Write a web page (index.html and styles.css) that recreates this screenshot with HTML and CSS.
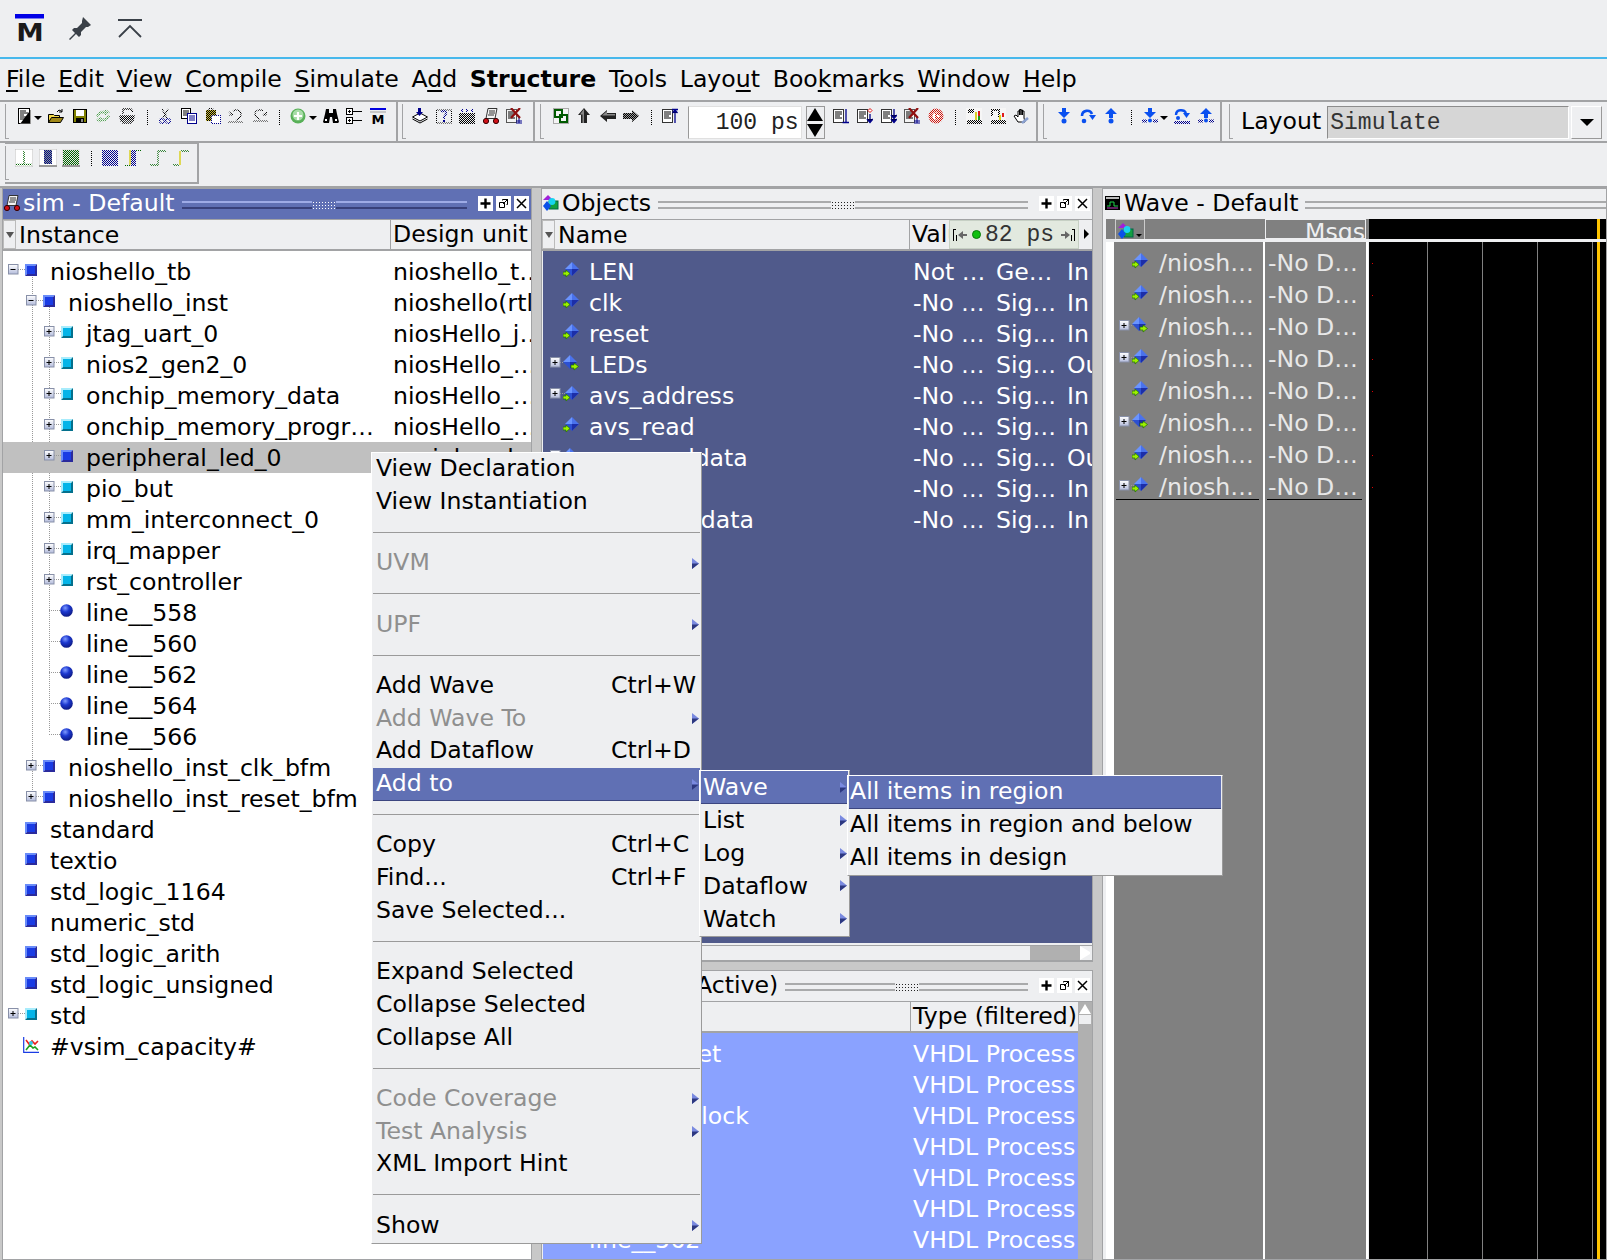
FILE: index.html
```html
<!DOCTYPE html>
<html lang="en">
<head>
  <meta charset="UTF-8">
  <title>ModelSim - sim</title>
  <link rel="stylesheet" href="styles.css">
</head>
<body>

  <svg class="sprite" xmlns="http://www.w3.org/2000/svg">
    <defs>
      <pattern id="dK" width="2" height="2" patternUnits="userSpaceOnUse"><rect width="1" height="1"/><rect x="1" y="1" width="1" height="1"/></pattern>
      <pattern id="dB" width="2" height="2" patternUnits="userSpaceOnUse"><rect width="1" height="1" fill="#00008c"/><rect x="1" y="1" width="1" height="1" fill="#00008c"/></pattern>
      <pattern id="dG" width="2" height="2" patternUnits="userSpaceOnUse"><rect width="1" height="1" fill="#006400"/><rect x="1" y="1" width="1" height="1" fill="#006400"/></pattern>
      <pattern id="dL" width="2" height="2" patternUnits="userSpaceOnUse"><rect width="1" height="1" fill="#4f9e4f"/><rect x="1" y="1" width="1" height="1" fill="#8fc98f"/></pattern>
      <pattern id="dR" width="2" height="2" patternUnits="userSpaceOnUse"><rect width="1" height="1" fill="#d4140c"/><rect x="1" y="1" width="1" height="1" fill="#d4140c"/></pattern>
      <radialGradient id="ballFill" cx="0.4" cy="0.3" r="0.8"><stop offset="0" stop-color="#7f9bff"/><stop offset="0.4" stop-color="#1c38d0"/><stop offset="1" stop-color="#0a1270"/></radialGradient>
      <linearGradient id="expFill" x1="0" y1="0" x2="0" y2="1"><stop offset="0" stop-color="#fff"/><stop offset="1" stop-color="#b4bcdc"/></linearGradient>
    </defs>

    <symbol id="sq-blue" viewBox="0 0 12 12"><path fill="#6a8cf8" d="M0 0h12L9 3H3v6L0 12z"/><path fill="#2a2a9c" d="M12 0v12H0l3-3h6V3z"/><rect x="2" y="2" width="8" height="8" fill="#1a3ce4"/></symbol>
    <symbol id="sq-cyan" viewBox="0 0 12 12"><path fill="#a8ecfc" d="M0 0h12L9 3H3v6L0 12z"/><path fill="#04708c" d="M12 0v12H0l3-3h6V3z"/><rect x="2" y="2" width="8" height="8" fill="#04b4e8"/></symbol>
    <symbol id="ball" viewBox="0 0 13 13"><circle cx="6.5" cy="6.5" r="6.3" fill="url(#ballFill)"/></symbol>
    <symbol id="plus" viewBox="0 0 17 11"><path stroke="#999" stroke-dasharray="1 1" d="M10 5.5h7"/><rect x=".5" y=".5" width="9.5" height="9.5" fill="url(#expFill)" stroke="#8890a8"/><path stroke="#000" d="M2.5 5.5h5M5 3v5"/></symbol>
    <symbol id="minus" viewBox="0 0 17 11"><path stroke="#999" stroke-dasharray="1 1" d="M10 5.5h7"/><rect x=".5" y=".5" width="9.5" height="9.5" fill="url(#expFill)" stroke="#8890a8"/><path stroke="#000" d="M2.5 5.5h5"/></symbol>
    <symbol id="tick" viewBox="0 0 17 11"><path stroke="#999" stroke-dasharray="1 1" d="M5 5.5h12"/></symbol>
    <symbol id="capacity" viewBox="0 0 16 16"><path fill="none" stroke="#1a3ce4" stroke-width="1.2" d="M.7 0v15.3H16"/><path fill="none" stroke="#e8201c" stroke-width="1.6" d="M3 3l3 4 3-3 3 3 3-3"/><path fill="none" stroke="#1ca01c" stroke-width="1.6" d="M3 13l4-5 3 3 2-1 3 3"/><circle cx="8" cy="6" r="2" fill="#38c8e8"/></symbol>

    <symbol id="sig-in" viewBox="0 0 16 16"><path fill="#4a72ec" d="M9 0l7 7-7 7z"/><path fill="#6a94ff" d="M9 0L2 7h7z"/><path fill="#1c2ea8" d="M16 7l-7 7V7z"/><path fill="#2c50d0" d="M2 7l7 7V7z"/><path fill="#9cf000" stroke="#207000" stroke-width=".7" d="M0 10h3V8l4 3.500L3 15v-2H0z"/></symbol>
    <symbol id="sig-out" viewBox="0 0 16 16"><path fill="#4a72ec" d="M7 0l7 7-7 7z"/><path fill="#6a94ff" d="M7 0L0 7h7z"/><path fill="#1c2ea8" d="M14 7l-7 7V7z"/><path fill="#2c50d0" d="M0 7l7 7V7z"/><path fill="#9cf000" stroke="#207000" stroke-width=".7" d="M8 10h3V8l4.500 3.500L11 15v-2H8z"/></symbol>

    <symbol id="objects" viewBox="0 0 16 16"><path fill="#a020d8" d="M5 0l5 5H0z"/><rect x="6" y="6" width="9" height="8" fill="#12a040" stroke="#064"/><path fill="#0a50e8" d="M4 6l4 5-4 5-4-5z"/><circle cx="9" cy="6.5" r="3.4" fill="#18d4f0"/></symbol>
    <symbol id="wave-ico" viewBox="0 0 16 16"><rect width="15" height="14" y="1" fill="#000"/><rect x="1" y="2" width="13" height="2" fill="#bbb"/><path fill="none" stroke="#1fd24a" d="M2 11h3V7h4v4h4"/><path stroke="#c040c0" d="M2 13h11"/></symbol>
    <symbol id="sim-ico" viewBox="0 0 16 16"><path fill="#f4f4f4" stroke="#333" d="M5 .5h9l-2 10H3z"/><path stroke="#333" d="M6 3h6M6 5h6M5 7h6"/><circle cx="3" cy="13" r="2.6" fill="#d01018" stroke="#300"/><circle cx="13" cy="13" r="2.6" fill="#d01018" stroke="#300"/></symbol>

    <symbol id="t-file" viewBox="0 0 16 16"><rect x="2.5" y=".5" width="11" height="15" fill="#fff" stroke="#000"/><path stroke="#000" d="M4 3h6M4 5h8M4 7h4M4 9h8M4 11h7"/><path stroke="#999" d="M14.500 2v14H4"/></symbol>
    <symbol id="t-folder" viewBox="0 0 16 16"><path fill="#f2d84a" stroke="#000" d="M.5 6.5h5l1 1h5v7H.5z"/><path fill="#a08818" stroke="#000" d="M.5 14.5l3-5h12l-3 5z"/><path fill="none" stroke="#000" d="M9 4l2-2 3 1.500M14 1v3h-3"/></symbol>
    <symbol id="t-save" viewBox="0 0 16 16"><rect x="1.500" y="1.500" width="13" height="13" fill="#808000" stroke="#000"/><rect x="4" y="2" width="8" height="6" fill="#fff"/><rect x="4" y="10" width="8" height="4" fill="#000"/><rect x="9" y="11" width="2" height="3" fill="#888"/></symbol>
    <symbol id="t-refresh" viewBox="0 0 16 16"><path fill="url(#dL)" d="M1 8c1-4 5-6 9-5V1l5 3-5 4V6c-3-1-5 0-7 3zM15 8c-1 4-5 6-9 5v2l-5-3 5-4v2c3 1 5 0 7-3z"/></symbol>
    <symbol id="t-print" viewBox="0 0 16 16"><path fill="none" stroke="url(#dK)" stroke-width="1.500" d="M4 6V1h8l2 3M1 8h14l-1 5H2zM4 13v2h8v-2"/><path fill="url(#dK)" d="M2 8h13v4H2z"/></symbol>
    <symbol id="t-cut" viewBox="0 0 16 16"><path fill="none" stroke="url(#dK)" stroke-width="1.300" d="M5 1l5 9M11 1L6 10"/><circle cx="5" cy="13" r="2.300" fill="none" stroke="url(#dB)" stroke-width="1.500"/><circle cx="11" cy="13" r="2.300" fill="none" stroke="url(#dB)" stroke-width="1.500"/></symbol>
    <symbol id="t-copy" viewBox="0 0 16 16"><rect x=".5" y=".5" width="9" height="10" fill="#fff" stroke="#000"/><path stroke="#000" d="M2 3h6M2 5h6M2 7h6"/><rect x="6.500" y="5.500" width="9" height="10" fill="#fff" stroke="#00008c"/><path stroke="#00008c" d="M8 8h6M8 10h6M8 12h6"/></symbol>
    <symbol id="t-paste" viewBox="0 0 16 16"><rect x="1" y="2" width="10" height="11" fill="#d0c040"/><rect x="1" y="2" width="10" height="11" fill="url(#dK)"/><rect x="6.500" y="7.500" width="9" height="8" fill="#fff" stroke="url(#dB)"/><path fill="none" stroke="url(#dK)" d="M4 2V.5h4V2"/></symbol>
    <symbol id="t-undo" viewBox="0 0 16 16"><path fill="none" stroke="url(#dK)" stroke-width="1.200" d="M5 3c3-2 8-1 8 3s-3 5-5 6M1 4l4 3M1 7h4M0 14h15"/></symbol>
    <symbol id="t-redo" viewBox="0 0 16 16"><path fill="none" stroke="url(#dK)" stroke-width="1.200" d="M11 3C8 1 3 2 3 6c0 3 2 4 5 5M15 4l-4 3M15 7h-4M1 13h15"/></symbol>
    <symbol id="t-add" viewBox="0 0 16 16"><circle cx="8" cy="8" r="7.500" fill="#58b058"/><circle cx="8" cy="7" r="5.500" fill="#a8dca8"/><path stroke="#fff" stroke-width="2.200" d="M8 4v8M4 8h8"/></symbol>
    <symbol id="t-bino" viewBox="0 0 16 16"><path d="M3 1h3v4h4V1h3l1 5 2 8-1 1H10l-1-6H7l-1 6H1l-1-1 2-8z"/><path fill="#fff" d="M2 11h2v2H2zM12 11h2v2h-2z"/></symbol>
    <symbol id="t-tree" viewBox="0 0 16 16"><g fill="#fff" stroke="#000"><rect x=".5" y=".5" width="6" height="6"/><rect x=".5" y="9.500" width="6" height="6"/></g><path stroke="#000" d="M2 3.500h3M3.500 2v3M2 12.500h3M3.500 11v3M7 3.500h9M7 12.500h9"/></symbol>
    <symbol id="t-m" viewBox="0 0 16 16"><rect width="16" height="2" fill="#0000e0"/><rect y="3" width="16" height="2" fill="#c8c8c8"/><text x="8" y="15.500" text-anchor="middle" class="logo-m">M</text></symbol>

    <symbol id="t-compile" viewBox="0 0 16 16"><path fill="#fff" stroke="#000" d="M.5 9L8 5l7.500 4L8 13z"/><path fill="none" stroke="#000" d="M.5 11L8 15l7.500-4"/><path fill="#00008c" d="M6 0h3v4h2L7.500 8 4 4h2z"/></symbol>
    <symbol id="t-help" viewBox="0 0 16 16"><rect x=".5" y="2" width="15" height="13" fill="none" stroke="url(#dK)"/><path fill="none" stroke="url(#dB)" stroke-width="2" d="M5 4c2-2 6-1 5 2l-2 3v2"/><rect x="7" y="12" width="2" height="2" fill="#00008c"/></symbol>
    <symbol id="t-wave" viewBox="0 0 16 16"><rect y="5" width="16" height="11" fill="url(#dK)"/><path fill="url(#dB)" d="M2 1h2v3H2zM7 1h2v3H7zM12 1h2v3h-2z"/></symbol>
    <symbol id="t-del" viewBox="0 0 16 16"><rect x=".5" y="1.500" width="10" height="13" fill="#f4f4f4" stroke="#555"/><path stroke="#000" d="M2 4h7M2 6h7M2 8h5M2 10h7"/><path stroke="#00008c" d="M13 8v7M10 13h6M10 15h6"/><path stroke="#901010" stroke-width="2.200" d="M5 0l9 10M14 0L5 10"/></symbol>

    <symbol id="t-link" viewBox="0 0 16 16"><rect x=".5" y=".5" width="15" height="15" fill="#f4f4f4" stroke="#aaa"/><g fill="none" stroke="#005a00" stroke-width="2"><rect x="2" y="2" width="7" height="7"/><rect x="7" y="7" width="7" height="7"/></g></symbol>
    <symbol id="t-up" viewBox="0 0 16 16"><path fill="#222" d="M8 0l6 7h-3v8H5V7H2z"/><path fill="#888" d="M8 1L4 6.500h2.500V15H8z"/></symbol>
    <symbol id="t-left" viewBox="0 0 16 16"><path fill="#222" d="M0 8l7-6v3h9v6H7v3z"/><path fill="#888" d="M2 7.500L7 3v3h8v1.500z"/></symbol>
    <symbol id="t-right" viewBox="0 0 16 16"><path fill="#999" d="M16 8L9 2v3H0v6h9v3z"/><path fill="url(#dK)" d="M16 8L9 2v3H0v6h9v3z"/></symbol>
    <symbol id="t-docup" viewBox="0 0 16 16"><rect x=".5" y="1.500" width="10" height="13" fill="#fff" stroke="#333"/><path stroke="#000" d="M2 4h7M2 6h7M2 8h5M2 10h7"/><path stroke="#00008c" stroke-width="1.300" d="M13 15V3M10 1.500h6M10.500 5L13 2l2.500 3"/></symbol>
    <symbol id="t-doc1" viewBox="0 0 16 16"><rect x=".5" y="1.500" width="10" height="13" fill="#fff" stroke="#333"/><path stroke="#000" d="M2 4h7M2 6h7M2 8h5M2 10h7"/><path stroke="#00008c" stroke-width="1.300" d="M13 1v13M9.500 14.500h7"/></symbol>
    <symbol id="t-doc2" viewBox="0 0 16 16"><rect x=".5" y="1.500" width="10" height="13" fill="#fff" stroke="#333"/><path stroke="#000" d="M2 4h7M2 6h7M2 8h5M2 10h7"/><path stroke="#00008c" stroke-width="1.300" d="M13 6v8M10 11l3 3.500 3-3.500"/><path fill="#fff" stroke="#e01010" d="M13 .5l2 2-2 2-2-2z"/></symbol>
    <symbol id="t-doc3" viewBox="0 0 16 16"><rect x=".5" y="1.500" width="10" height="13" fill="#fff" stroke="#333"/><path stroke="#000" d="M2 4h7M2 6h7M2 8h5M2 10h7"/><path stroke="#00008c" stroke-width="1.300" d="M13 1v14M10 7l3 3.500L16 7M10 11l3 3.500 3-3.500"/></symbol>
    <symbol id="t-red" viewBox="0 0 16 16"><circle cx="8" cy="8" r="7.500" fill="url(#dR)"/><circle cx="8" cy="8" r="3.500" fill="#fff"/><path fill="url(#dR)" d="M7 5h5v2H9v2h3v2H7z"/></symbol>
    <symbol id="t-chart1" viewBox="0 0 16 16"><rect width="16" height="16" fill="#f6f6f6"/><path fill="url(#dK)" d="M2 1h6v4H2zM1 12h15v4H1z"/><path fill="#d8d020" d="M9 4h2v8H9z"/><path fill="#e01c1c" d="M12 3h2v5h-2z"/><path fill="#1c9c1c" d="M12 8h2v4h-2z"/></symbol>
    <symbol id="t-chart2" viewBox="0 0 16 16"><rect width="16" height="16" fill="#f6f6f6"/><path fill="none" stroke="url(#dK)" stroke-width="2" d="M2 8V2h7v8"/><path fill="url(#dK)" d="M1 12h15v4H1z"/><path fill="#d8d020" d="M9 7h2v5H9z"/><path fill="#e01c1c" d="M12 5h2v4h-2z"/></symbol>
    <symbol id="t-hand" viewBox="0 0 16 16"><path fill="#fff" stroke="#000" d="M1 8l2-1 2 2V3h1.500v4V1.500H8V7V2h1.500v5V3H11v7l1 4H5z"/><path stroke="#8aa0d0" stroke-width="2.500" d="M9 15l6-5"/></symbol>

    <symbol id="s-in" viewBox="0 0 16 16"><path fill="#0a50f0" d="M6 0h4v4h4l-6 6-6-6h4z"/><circle cx="8" cy="13" r="2.500" fill="#0a50f0"/></symbol>
    <symbol id="s-over" viewBox="0 0 16 16"><path fill="none" stroke="#0a50f0" stroke-width="2.600" d="M2 8c0-6 8-7 10-2"/><path fill="#0a50f0" d="M9 7h7l-3.500 5z"/><circle cx="4" cy="13" r="2.300" fill="#0a50f0"/></symbol>
    <symbol id="s-out" viewBox="0 0 16 16"><path fill="#0a50f0" d="M8 0l6 6h-4v4H6V6H2z"/><circle cx="8" cy="13" r="2.500" fill="#0a50f0"/></symbol>
    <symbol id="s-inl" viewBox="0 0 16 16"><path fill="#0a50f0" d="M6 0h4v4h4l-6 6-6-6h4z"/><circle cx="8" cy="12.500" r="2" fill="#0a50f0"/><path stroke="url(#dB)" stroke-width="3" d="M0 13h5M11 13h5"/></symbol>
    <symbol id="s-overl" viewBox="0 0 16 16"><path fill="none" stroke="#0a50f0" stroke-width="2.400" d="M2 7c0-6 8-6 10-2"/><path fill="#0a50f0" d="M9 5h7l-3.500 5z"/><circle cx="4" cy="10" r="2" fill="#0a50f0"/><path stroke="url(#dB)" stroke-width="3" d="M0 14.500h16"/></symbol>
    <symbol id="s-outl" viewBox="0 0 16 16"><path fill="#0a50f0" d="M8 0l6 6h-4v4H6V6H2z"/><circle cx="8" cy="12.500" r="2" fill="#0a50f0"/><path stroke="url(#dB)" stroke-width="3" d="M0 13h5M11 13h5"/></symbol>

    <symbol id="w-1" viewBox="0 0 18 18"><rect width="18" height="18" fill="#fff" stroke="#bbb"/><path stroke="url(#dG)" stroke-width="1.500" d="M9 2v13M1 15.500h16"/></symbol>
    <symbol id="w-2" viewBox="0 0 18 18"><rect width="18" height="18" fill="#fff" stroke="#bbb"/><path fill="#8fa08f" d="M5 1h8v14H5z"/><path fill="url(#dB)" d="M5 1h8v14H5z"/><rect y="16" width="18" height="2" fill="#999"/></symbol>
    <symbol id="w-3" viewBox="0 0 18 18"><rect width="18" height="18" fill="#e4e4e4"/><rect x="1" y="1" width="16" height="15" fill="url(#dG)"/><rect y="16" width="18" height="2" fill="#999"/></symbol>
    <symbol id="w-4" viewBox="0 0 18 18"><rect x="1" y="1" width="16" height="16" fill="url(#dB)"/></symbol>
    <symbol id="w-5" viewBox="0 0 18 18"><rect x="6" y="1" width="5" height="16" fill="url(#dB)"/><path stroke="#d8d020" stroke-width="1.500" d="M5 1v15"/><path stroke="url(#dG)" d="M0 16.500h5M11 1.500h6"/></symbol>
    <symbol id="w-6" viewBox="0 0 18 18"><path fill="none" stroke="url(#dG)" stroke-width="1.300" d="M1 16h8V2h8"/></symbol>
    <symbol id="w-7" viewBox="0 0 18 18"><path fill="none" stroke="url(#dG)" stroke-width="1.300" d="M1 16h6M9 2h8"/><path stroke="#d8d020" stroke-width="1.500" d="M8 2v14"/></symbol>

    <symbol id="win-plus" viewBox="0 0 15 15"><path stroke="#000" stroke-width="2.400" d="M7.500 2.500v10M2.500 7.500h10"/></symbol>
    <symbol id="win-pop" viewBox="0 0 15 15"><path fill="none" stroke="#000" d="M3.500 6.500h5v5h-5zM6.500 4.500v-1h5v5h-1M7 8l5-5"/></symbol>
    <symbol id="win-x" viewBox="0 0 15 15"><path stroke="#000" stroke-width="1.500" d="M3 3l9 9M12 3l-9 9"/></symbol>
    <symbol id="sub-arrow" viewBox="0 0 7 11"><path fill="#7a8ae0" d="M0 0l7 5.500L0 11z"/><path fill="#2d3880" d="M0 11l7-5.500H0z"/></symbol>
    <symbol id="cur-l" viewBox="0 0 16 16"><path stroke="#000" d="M2.500 2v12M2 2.500h3M5.500 14V8"/><path fill="#666" d="M7 8l5-4v3h4v2h-4v3z"/></symbol>
    <symbol id="cur-r" viewBox="0 0 16 16"><path stroke="#000" d="M13.500 2v12M14 2.500h-3M10.500 14V8"/><path fill="#666" d="M9 8L4 4v3H0v2h4v3z"/></symbol>
    <symbol id="pin" viewBox="0 0 24 24"><path fill="#3a4048" d="M15 1l8 8-3 2-2 0-5 5 0 3-2 2-3-3-6 6-1-1 6-6-3-3 2-2 3 0 5-5 0-2z"/></symbol>
  </svg>

  <div class="titlebar">
    <div class="wm-logo"><span class="wm-logo__bar"></span><span class="wm-logo__m">M</span></div>
    <svg class="wm-pin"><use href="#pin"/></svg>
    <svg class="wm-shade" viewBox="0 0 24 20"><path fill="none" stroke="#3a4048" stroke-width="1.800" d="M0 1h24M1 18L12 7l11 11"/></svg>
  </div>

  <nav class="menubar">
    <span><u>F</u>ile</span>
    <span><u>E</u>dit</span>
    <span><u>V</u>iew</span>
    <span><u>C</u>ompile</span>
    <span><u>S</u>imulate</span>
    <span>A<u>d</u>d</span>
    <span class="menubar__active">Str<u>u</u>cture</span>
    <span>T<u>o</u>ols</span>
    <span>Layo<u>u</u>t</span>
    <span>Boo<u>k</u>marks</span>
    <span><u>W</u>indow</span>
    <span><u>H</u>elp</span>
  </nav>

  <div class="toolrow">
    <div class="toolbar toolbar--a">
      <svg class="tool"><use href="#t-file"/></svg><i class="drop"></i>
      <svg class="tool"><use href="#t-folder"/></svg>
      <svg class="tool"><use href="#t-save"/></svg>
      <svg class="tool"><use href="#t-refresh"/></svg>
      <svg class="tool"><use href="#t-print"/></svg>
      <i class="sep"></i>
      <svg class="tool"><use href="#t-cut"/></svg>
      <svg class="tool"><use href="#t-copy"/></svg>
      <svg class="tool"><use href="#t-paste"/></svg>
      <svg class="tool"><use href="#t-undo"/></svg>
      <svg class="tool"><use href="#t-redo"/></svg>
      <i class="sep"></i>
      <svg class="tool"><use href="#t-add"/></svg><i class="drop"></i>
      <svg class="tool"><use href="#t-bino"/></svg>
      <svg class="tool"><use href="#t-tree"/></svg>
      <svg class="tool"><use href="#t-m"/></svg>
    </div>
    <div class="toolbar toolbar--b">
      <svg class="tool"><use href="#t-compile"/></svg>
      <svg class="tool"><use href="#t-help"/></svg>
      <svg class="tool"><use href="#t-wave"/></svg>
      <svg class="tool"><use href="#sim-ico"/></svg>
      <svg class="tool"><use href="#t-del"/></svg>
    </div>
    <div class="toolbar toolbar--c">
      <svg class="tool"><use href="#t-link"/></svg>
      <svg class="tool"><use href="#t-up"/></svg>
      <svg class="tool"><use href="#t-left"/></svg>
      <svg class="tool"><use href="#t-right"/></svg>
      <i class="sep"></i>
      <svg class="tool"><use href="#t-docup"/></svg>
      <div class="runlength">100 ps</div>
      <div class="spin"><i class="spin__up"></i><i class="spin__down"></i></div>
      <svg class="tool"><use href="#t-doc1"/></svg>
      <svg class="tool"><use href="#t-doc2"/></svg>
      <svg class="tool"><use href="#t-doc3"/></svg>
      <svg class="tool"><use href="#t-del"/></svg>
      <svg class="tool"><use href="#t-red"/></svg>
      <i class="sep"></i>
      <svg class="tool"><use href="#t-chart1"/></svg>
      <svg class="tool"><use href="#t-chart2"/></svg>
      <svg class="tool"><use href="#t-hand"/></svg>
    </div>
    <div class="toolbar toolbar--d">
      <svg class="tool"><use href="#s-in"/></svg>
      <svg class="tool"><use href="#s-over"/></svg>
      <svg class="tool"><use href="#s-out"/></svg>
      <i class="sep"></i>
      <svg class="tool"><use href="#s-inl"/></svg><i class="drop"></i>
      <svg class="tool"><use href="#s-overl"/></svg>
      <svg class="tool"><use href="#s-outl"/></svg>
    </div>
    <div class="toolbar toolbar--e">
      <span class="layout-label">Layout</span>
      <div class="combo">Simulate</div>
      <div class="combo__btn"><i></i></div>
    </div>
  </div>

  <div class="toolrow toolrow--short">
    <div class="toolbar toolbar--f">
      <svg class="tool"><use href="#w-1"/></svg>
      <svg class="tool"><use href="#w-2"/></svg>
      <svg class="tool"><use href="#w-3"/></svg>
      <i class="sep"></i>
      <svg class="tool"><use href="#w-4"/></svg>
      <svg class="tool"><use href="#w-5"/></svg>
      <svg class="tool"><use href="#w-6"/></svg>
      <svg class="tool"><use href="#w-7"/></svg>
    </div>
  </div>

  <main class="workspace">

    <section class="pane pane--sim">
      <header class="paneTitle paneTitle--active">
        <svg class="paneTitle__icon"><use href="#sim-ico"/></svg>
        <span>sim - Default</span>
        <div class="grip"></div>
        <div class="winBtns">
          <b><svg><use href="#win-plus"/></svg></b><b><svg><use href="#win-pop"/></svg></b><b><svg><use href="#win-x"/></svg></b>
        </div>
      </header>
      <div class="colHead colHead--sim">
        <span class="colHead__sort"></span>
        <span>Instance</span>
        <span>Design unit</span>
      </div>
      <div class="tree">
        <i class="vline vline--one"></i>
        <i class="vline vline--two"></i>
        <div class="tree__row l0"><svg class="exp"><use href="#minus"/></svg><svg class="ico"><use href="#sq-blue"/></svg><span class="tree__name">nioshello_tb</span><span class="tree__unit">nioshello_t…</span></div>
        <div class="tree__row l1"><svg class="exp"><use href="#minus"/></svg><svg class="ico"><use href="#sq-blue"/></svg><span class="tree__name">nioshello_inst</span><span class="tree__unit">nioshello(rtl)</span></div>
        <div class="tree__row l2"><svg class="exp"><use href="#plus"/></svg><svg class="ico"><use href="#sq-cyan"/></svg><span class="tree__name">jtag_uart_0</span><span class="tree__unit">niosHello_j…</span></div>
        <div class="tree__row l2"><svg class="exp"><use href="#plus"/></svg><svg class="ico"><use href="#sq-cyan"/></svg><span class="tree__name">nios2_gen2_0</span><span class="tree__unit">niosHello_…</span></div>
        <div class="tree__row l2"><svg class="exp"><use href="#plus"/></svg><svg class="ico"><use href="#sq-cyan"/></svg><span class="tree__name">onchip_memory_data</span><span class="tree__unit">niosHello_…</span></div>
        <div class="tree__row l2"><svg class="exp"><use href="#plus"/></svg><svg class="ico"><use href="#sq-cyan"/></svg><span class="tree__name">onchip_memory_progr…</span><span class="tree__unit">niosHello_…</span></div>
        <div class="tree__row l2 tree__row--selected"><svg class="exp"><use href="#plus"/></svg><svg class="ico"><use href="#sq-blue"/></svg><span class="tree__name">peripheral_led_0</span><span class="tree__unit">peripheral_…</span></div>
        <div class="tree__row l2"><svg class="exp"><use href="#plus"/></svg><svg class="ico"><use href="#sq-cyan"/></svg><span class="tree__name">pio_but</span></div>
        <div class="tree__row l2"><svg class="exp"><use href="#plus"/></svg><svg class="ico"><use href="#sq-cyan"/></svg><span class="tree__name">mm_interconnect_0</span></div>
        <div class="tree__row l2"><svg class="exp"><use href="#plus"/></svg><svg class="ico"><use href="#sq-cyan"/></svg><span class="tree__name">irq_mapper</span></div>
        <div class="tree__row l2"><svg class="exp"><use href="#plus"/></svg><svg class="ico"><use href="#sq-cyan"/></svg><span class="tree__name">rst_controller</span></div>
        <div class="tree__row l2"><svg class="exp"><use href="#tick"/></svg><svg class="ico ico--ball"><use href="#ball"/></svg><span class="tree__name">line__558</span></div>
        <div class="tree__row l2"><svg class="exp"><use href="#tick"/></svg><svg class="ico ico--ball"><use href="#ball"/></svg><span class="tree__name">line__560</span></div>
        <div class="tree__row l2"><svg class="exp"><use href="#tick"/></svg><svg class="ico ico--ball"><use href="#ball"/></svg><span class="tree__name">line__562</span></div>
        <div class="tree__row l2"><svg class="exp"><use href="#tick"/></svg><svg class="ico ico--ball"><use href="#ball"/></svg><span class="tree__name">line__564</span></div>
        <div class="tree__row l2"><svg class="exp"><use href="#tick"/></svg><svg class="ico ico--ball"><use href="#ball"/></svg><span class="tree__name">line__566</span></div>
        <div class="tree__row l1"><svg class="exp"><use href="#plus"/></svg><svg class="ico"><use href="#sq-blue"/></svg><span class="tree__name">nioshello_inst_clk_bfm</span></div>
        <div class="tree__row l1"><svg class="exp"><use href="#plus"/></svg><svg class="ico"><use href="#sq-blue"/></svg><span class="tree__name">nioshello_inst_reset_bfm</span></div>
        <div class="tree__row l0"><i class="exp"></i><svg class="ico"><use href="#sq-blue"/></svg><span class="tree__name">standard</span></div>
        <div class="tree__row l0"><i class="exp"></i><svg class="ico"><use href="#sq-blue"/></svg><span class="tree__name">textio</span></div>
        <div class="tree__row l0"><i class="exp"></i><svg class="ico"><use href="#sq-blue"/></svg><span class="tree__name">std_logic_1164</span></div>
        <div class="tree__row l0"><i class="exp"></i><svg class="ico"><use href="#sq-blue"/></svg><span class="tree__name">numeric_std</span></div>
        <div class="tree__row l0"><i class="exp"></i><svg class="ico"><use href="#sq-blue"/></svg><span class="tree__name">std_logic_arith</span></div>
        <div class="tree__row l0"><i class="exp"></i><svg class="ico"><use href="#sq-blue"/></svg><span class="tree__name">std_logic_unsigned</span></div>
        <div class="tree__row l0"><svg class="exp"><use href="#plus"/></svg><svg class="ico"><use href="#sq-cyan"/></svg><span class="tree__name">std</span></div>
        <div class="tree__row l0"><i class="exp"></i><svg class="ico ico--cap"><use href="#capacity"/></svg><span class="tree__name">#vsim_capacity#</span></div>
      </div>
    </section>

    <div class="sash"></div>

    <div class="midColumn">
      <section class="pane pane--objects">
        <header class="paneTitle">
          <svg class="paneTitle__icon"><use href="#objects"/></svg>
          <span>Objects</span>
          <div class="grip"></div>
          <div class="winBtns">
            <b><svg><use href="#win-plus"/></svg></b><b><svg><use href="#win-pop"/></svg></b><b><svg><use href="#win-x"/></svg></b>
          </div>
        </header>
        <div class="colHead colHead--objects">
          <span class="colHead__sort"></span>
          <span>Name</span>
          <span>Value</span>
          <div class="cursorBox">
            <svg><use href="#cur-l"/></svg>
            <i class="cursorBox__dot"></i>
            <span class="cursorBox__time">82 ps</span>
            <svg><use href="#cur-r"/></svg>
          </div>
          <i class="cursorMore"></i>
        </div>
        <div class="objList">
          <div class="objRow"><i class="exp"></i><svg class="sig"><use href="#sig-in"/></svg><span>LEN</span><span>Not …</span><span>Ge…</span><span>In</span></div>
          <div class="objRow"><i class="exp"></i><svg class="sig"><use href="#sig-in"/></svg><span>clk</span><span>-No …</span><span>Sig…</span><span>In</span></div>
          <div class="objRow"><i class="exp"></i><svg class="sig"><use href="#sig-in"/></svg><span>reset</span><span>-No …</span><span>Sig…</span><span>In</span></div>
          <div class="objRow"><svg class="exp"><use href="#plus"/></svg><svg class="sig"><use href="#sig-out"/></svg><span>LEDs</span><span>-No …</span><span>Sig…</span><span>Ou</span></div>
          <div class="objRow"><svg class="exp"><use href="#plus"/></svg><svg class="sig"><use href="#sig-in"/></svg><span>avs_address</span><span>-No …</span><span>Sig…</span><span>In</span></div>
          <div class="objRow"><i class="exp"></i><svg class="sig"><use href="#sig-in"/></svg><span>avs_read</span><span>-No …</span><span>Sig…</span><span>In</span></div>
          <div class="objRow"><svg class="exp"><use href="#plus"/></svg><svg class="sig"><use href="#sig-out"/></svg><span>avs_readdata</span><span>-No …</span><span>Sig…</span><span>Ou</span></div>
          <div class="objRow"><i class="exp"></i><svg class="sig"><use href="#sig-in"/></svg><span>avs_write</span><span>-No …</span><span>Sig…</span><span>In</span></div>
          <div class="objRow"><svg class="exp"><use href="#plus"/></svg><svg class="sig"><use href="#sig-in"/></svg><span>avs_writedata</span><span>-No …</span><span>Sig…</span><span>In</span></div>
        </div>
        <div class="hscroll"><i class="hscroll__thumb"></i><i class="hscroll__arrow"></i></div>
      </section>

      <div class="hsash"></div>

      <section class="pane pane--processes">
        <header class="paneTitle">
          <span class="paneTitle__pad">Processes (Active)</span>
          <div class="grip"></div>
          <div class="winBtns">
            <b><svg><use href="#win-plus"/></svg></b><b><svg><use href="#win-pop"/></svg></b><b><svg><use href="#win-x"/></svg></b>
          </div>
        </header>
        <div class="procBody">
          <div class="procMain">
            <div class="colHead colHead--proc">
              <span>Name</span>
              <span>Type (filtered)</span>
            </div>
            <div class="procList">
              <div class="procRow"><span>clock_reset</span><span>VHDL Process</span></div>
              <div class="procRow"><span>line__550</span><span>VHDL Process</span></div>
              <div class="procRow"><span>monitor-clock</span><span>VHDL Process</span></div>
              <div class="procRow"><span>line__556</span><span>VHDL Process</span></div>
              <div class="procRow"><span>line__558</span><span>VHDL Process</span></div>
              <div class="procRow"><span>line__560</span><span>VHDL Process</span></div>
              <div class="procRow"><span>line__562</span><span>VHDL Process</span></div>
            </div>
          </div>
          <div class="vscroll"><i class="vscroll__arrow"></i><i class="vscroll__box"></i></div>
        </div>
      </section>
    </div>

    <div class="sash"></div>

    <section class="pane pane--wave">
      <header class="paneTitle">
        <svg class="paneTitle__icon"><use href="#wave-ico"/></svg>
        <span>Wave - Default</span>
        <div class="grip grip--plain"></div>
      </header>
      <div class="waveHead">
        <div class="waveHead__names"><div class="waveHead__filter"><svg><use href="#objects"/></svg><i></i></div></div>
        <div class="waveHead__msgs"><span>Msgs</span></div>
        <div class="waveHead__plot"></div>
      </div>
      <div class="waveBody">
        <div class="waveNames">
          <div class="waveRow"><i class="exp"></i><svg class="sig"><use href="#sig-in"/></svg><span>/niosh…</span></div>
          <div class="waveRow"><i class="exp"></i><svg class="sig"><use href="#sig-in"/></svg><span>/niosh…</span></div>
          <div class="waveRow"><svg class="exp"><use href="#plus"/></svg><svg class="sig"><use href="#sig-out"/></svg><span>/niosh…</span></div>
          <div class="waveRow"><svg class="exp"><use href="#plus"/></svg><svg class="sig"><use href="#sig-in"/></svg><span>/niosh…</span></div>
          <div class="waveRow"><i class="exp"></i><svg class="sig"><use href="#sig-in"/></svg><span>/niosh…</span></div>
          <div class="waveRow"><svg class="exp"><use href="#plus"/></svg><svg class="sig"><use href="#sig-out"/></svg><span>/niosh…</span></div>
          <div class="waveRow"><i class="exp"></i><svg class="sig"><use href="#sig-in"/></svg><span>/niosh…</span></div>
          <div class="waveRow"><svg class="exp"><use href="#plus"/></svg><svg class="sig"><use href="#sig-in"/></svg><span>/niosh…</span></div>
          <div class="waveEnd"></div>
        </div>
        <div class="waveVals">
          <div class="waveRow">-No D…</div>
          <div class="waveRow">-No D…</div>
          <div class="waveRow">-No D…</div>
          <div class="waveRow">-No D…</div>
          <div class="waveRow">-No D…</div>
          <div class="waveRow">-No D…</div>
          <div class="waveRow">-No D…</div>
          <div class="waveRow">-No D…</div>
          <div class="waveEnd"></div>
        </div>
        <div class="wavePlot">
          <div class="waveCursor"></div>
          <div class="waveRow"><i class="mark"></i></div>
          <div class="waveRow"><i class="mark"></i></div>
          <div class="waveRow"></div>
          <div class="waveRow"><i class="mark"></i></div>
          <div class="waveRow"><i class="mark"></i></div>
          <div class="waveRow"></div>
          <div class="waveRow"><i class="mark"></i></div>
          <div class="waveRow"><i class="mark"></i></div>
        </div>
      </div>
    </section>

  </main>

  <!-- context menu over the sim pane -->
  <div class="menu menu--context">
    <div class="menu__item">View Declaration</div>
    <div class="menu__item">View Instantiation</div>
    <hr class="menu__sep">
    <div class="menu__item menu__item--off">UVM<svg class="subArrow"><use href="#sub-arrow"/></svg></div>
    <hr class="menu__sep">
    <div class="menu__item menu__item--off">UPF<svg class="subArrow"><use href="#sub-arrow"/></svg></div>
    <hr class="menu__sep">
    <div class="menu__item">Add Wave<span class="menu__key">Ctrl+W</span></div>
    <div class="menu__item menu__item--off">Add Wave To<svg class="subArrow"><use href="#sub-arrow"/></svg></div>
    <div class="menu__item">Add Dataflow<span class="menu__key">Ctrl+D</span></div>
    <div class="menu__item menu__item--on">Add to<svg class="subArrow"><use href="#sub-arrow"/></svg></div>
    <hr class="menu__sep">
    <div class="menu__item">Copy<span class="menu__key">Ctrl+C</span></div>
    <div class="menu__item">Find...<span class="menu__key">Ctrl+F</span></div>
    <div class="menu__item">Save Selected...</div>
    <hr class="menu__sep">
    <div class="menu__item">Expand Selected</div>
    <div class="menu__item">Collapse Selected</div>
    <div class="menu__item">Collapse All</div>
    <hr class="menu__sep">
    <div class="menu__item menu__item--off">Code Coverage<svg class="subArrow"><use href="#sub-arrow"/></svg></div>
    <div class="menu__item menu__item--off">Test Analysis<svg class="subArrow"><use href="#sub-arrow"/></svg></div>
    <div class="menu__item">XML Import Hint</div>
    <hr class="menu__sep">
    <div class="menu__item">Show<svg class="subArrow"><use href="#sub-arrow"/></svg></div>
  </div>

  <div class="menu menu--addto">
    <div class="menu__item menu__item--on">Wave<svg class="subArrow"><use href="#sub-arrow"/></svg></div>
    <div class="menu__item">List<svg class="subArrow"><use href="#sub-arrow"/></svg></div>
    <div class="menu__item">Log<svg class="subArrow"><use href="#sub-arrow"/></svg></div>
    <div class="menu__item">Dataflow<svg class="subArrow"><use href="#sub-arrow"/></svg></div>
    <div class="menu__item">Watch<svg class="subArrow"><use href="#sub-arrow"/></svg></div>
  </div>

  <div class="menu menu--wave">
    <div class="menu__item menu__item--on">All items in region</div>
    <div class="menu__item">All items in region and below</div>
    <div class="menu__item">All items in design</div>
  </div>

</body>
</html>
```

FILE: styles.css
```css
* {
  box-sizing: border-box;
  padding: 0;
  margin: 0;
}
body {
  width: 1607px;
  height: 1260px;
  overflow: hidden;
  position: relative;
  background-color: #eeeff1;
  color: #000;
  font-family: "DejaVu Sans", sans-serif;
  font-size: 23.6px;
  display: flex;
  flex-direction: column;
}
.sprite {
  display: block;
  width: 0;
  height: 0;
  overflow: hidden;
}
.logo-m {
  font-family: "DejaVu Sans", sans-serif;
  font-weight: 700;
  font-size: 13px;
  fill: #000;
}
i {
  display: block;
}

/* window manager strip */
.titlebar {
  height: 59px;
  flex: none;
  display: flex;
  align-items: flex-start;
  border-bottom: 2px solid #47b8ec;
}
.wm-logo {
  width: 29px;
  margin: 14px 0 0 15px;
  display: flex;
  flex-direction: column;
  align-items: center;
}
.wm-logo__bar {
  display: block;
  width: 29px;
  height: 5px;
  background-color: #0000e6;
  border-bottom: 1px solid #7a7af0;
}
.wm-logo__m {
  font-weight: 700;
  font-size: 24px;
  line-height: 28px;
  color: #1a1a1a;
  transform: scaleX(1.15);
}
.wm-pin {
  width: 24px;
  height: 24px;
  margin: 16px 0 0 24px;
}
.wm-shade {
  width: 24px;
  height: 20px;
  margin: 19px 0 0 26px;
}

/* menu bar */
.menubar {
  height: 41px;
  flex: none;
  display: flex;
  align-items: center;
  padding: 0 0 2px 6px;
  gap: 12.7px;
}
.menubar u {
  text-underline-offset: 3px;
}
.menubar__active {
  font-weight: 700;
}

/* tool bars */
.toolrow {
  height: 43px;
  flex: none;
  display: flex;
  border-top: 2px solid #a2a3a5;
  border-bottom: 2px solid #a2a3a5;
}
.toolrow--short {
  height: 43px;
  border: none;
}
.toolbar {
  display: flex;
  align-items: flex-start;
  padding-top: 6px;
  height: 100%;
  position: relative;
  border-right: 2px solid #a2a3a5;
}
.toolbar::before {
  content: "";
  position: absolute;
  left: 0;
  top: 2px;
  bottom: 2px;
  width: 3px;
  border-left: 1px solid #a2a3a5;
  border-bottom: 1px solid #a2a3a5;
}
.toolbar--a {
  width: 393px;
  margin-left: 5px;
  padding-left: 6.8px;
}
.toolbar--b {
  width: 133px;
  margin-left: 4px;
  padding-left: 6.2px;
}
.toolbar--c {
  width: 498px;
  margin-left: 5px;
  padding-left: 8.8px;
}
.toolbar--d {
  width: 179px;
  margin-left: 5px;
  padding-left: 9.2px;
}
.toolbar--e {
  flex: 1;
  border-right: none;
  padding: 4px 0 0 12px;
  margin-left: 7px;
}
.toolbar--f {
  width: 194px;
  height: 41px;
  margin-left: 5px;
  padding: 5px 0 0 7px;
  border-top: 1px solid #a2a3a5;
  border-bottom: 2px solid #a2a3a5;
}
.tool {
  display: block;
  flex: none;
  width: 16px;
  height: 16px;
  margin: 0 3.8px;
}
.toolbar--f .tool {
  width: 18px;
  height: 18px;
  margin: 0 2.9px;
}
.drop {
  flex: none;
  width: 0;
  height: 0;
  margin: 8px 2px 0 -1px;
  border-left: 4px solid transparent;
  border-right: 4px solid transparent;
  border-top: 4px solid #000;
}
.sep {
  flex: none;
  width: 1px;
  height: 16px;
  margin: 2px 6px 0 7.8px;
  background-image: repeating-linear-gradient(#000 0 1px, transparent 1px 2px);
}
.runlength {
  flex: none;
  width: 114px;
  height: 33px;
  margin: -2px 4px 0 6px;
  background-color: #fff;
  border: 1px solid #e0e0e0;
  border-left-color: #999;
  font-family: "Liberation Mono", monospace;
  font-size: 23px;
  line-height: 33px;
  color: #222;
  text-align: right;
  padding-right: 2px;
}
.spin {
  flex: none;
  width: 19px;
  height: 33px;
  margin: -2px 5px 0 0;
  border: 1px solid #999;
  display: flex;
  flex-direction: column;
  align-items: center;
  justify-content: space-between;
  padding: 1px 0;
}
.spin__up {
  border-left: 8px solid transparent;
  border-right: 8px solid transparent;
  border-bottom: 13px solid #000;
}
.spin__down {
  border-left: 8px solid transparent;
  border-right: 8px solid transparent;
  border-top: 13px solid #000;
}
.layout-label {
  line-height: 30px;
  margin-right: 6px;
}
.combo {
  width: 242px;
  height: 33px;
  flex: none;
  background-color: #d6d6d6;
  border: 1px solid #8c8c8c;
  border-right-color: #fff;
  border-bottom-color: #fff;
  font-family: "Liberation Mono", monospace;
  font-size: 23px;
  line-height: 33px;
  color: #333;
  padding-left: 2px;
}
.combo__btn {
  width: 31px;
  height: 33px;
  flex: none;
  margin-left: 2px;
  border: 1px solid #fff;
  border-right-color: #999;
  border-bottom-color: #999;
  display: flex;
  align-items: center;
  justify-content: center;
}
.combo__btn i {
  border-left: 7px solid transparent;
  border-right: 7px solid transparent;
  border-top: 7px solid #000;
}

/* panes */
.workspace {
  flex: 1;
  min-height: 0;
  display: flex;
  padding-left: 2px;
  background-color: #c8c8c8;
  border-top: 2px solid #a2a3a5;
}
.sash {
  flex: none;
  width: 9px;
  background-color: #c8c8c8;
}
.hsash {
  flex: none;
  height: 8px;
  background-color: #c8c8c8;
}
.pane {
  display: flex;
  flex-direction: column;
  background-color: #eeeff1;
  border: 1px solid #a2a3a5;
}
.pane--sim {
  width: 530px;
  flex: none;
}
.midColumn {
  width: 552px;
  flex: none;
  display: flex;
  flex-direction: column;
}
.pane--objects {
  height: 774px;
  flex: none;
}
.pane--processes {
  flex: 1;
  min-height: 0;
}
.pane--wave {
  flex: 1;
  min-width: 0;
}
.pane--wave .paneTitle {
  padding-left: 2px;
}
.paneTitle {
  height: 30px;
  flex: none;
  display: flex;
  align-items: center;
  padding: 0 0 2px 1px;
  gap: 3px;
  --grip-bg: #eeeff1;
  --grip-dot: #222;
  --grip-top: #a9aaab;
  --grip-bottom: #a9aaab;
}
.paneTitle--active {
  background-color: #6070b4;
  color: #fff;
  --grip-bg: #6070b4;
  --grip-dot: #fff;
  --grip-top: #9eabe6;
  --grip-bottom: #38407a;
}
.paneTitle__icon {
  width: 16px;
  height: 16px;
  flex: none;
}
.paneTitle__pad {
  padding-left: 20px;
}
.grip {
  flex: 1;
  height: 8px;
  border-top: 2px solid var(--grip-top);
  border-bottom: 2px solid var(--grip-bottom);
  margin: 3px 8px 0 4px;
  position: relative;
}
.grip::after {
  content: "";
  position: absolute;
  left: 50%;
  top: -2px;
  bottom: -2px;
  width: 24px;
  margin-left: -12px;
  background-color: var(--grip-bg);
  background-image: radial-gradient(var(--grip-dot) 35%, transparent 40%);
  background-size: 3px 3px;
}
.grip--plain {
  margin-right: 0;
}
.grip--plain::after {
  display: none;
}
.winBtns {
  display: flex;
  gap: 3px;
  padding-right: 2px;
}
.winBtns b {
  display: block;
  width: 15px;
  height: 15px;
  background-color: #fff;
}
.winBtns svg {
  display: block;
  width: 15px;
  height: 15px;
}
.colHead {
  height: 32px;
  flex: none;
  display: flex;
  align-items: center;
  position: relative;
  border-top: 1px solid #a2a3a5;
  border-bottom: 2px solid #a2a3a5;
}
.colHead--sim {
  display: grid;
  grid-template-columns: 16px 371px 1fr;
}
.colHead--objects {
  display: grid;
  grid-template-columns: 16px 351px 1fr;
}
.colHead--sim span + span + span,
.colHead--objects span + span + span,
.colHead--proc span + span {
  border-left: 1px solid #a2a3a5;
  padding-left: 2px;
  line-height: 29px;
  white-space: nowrap;
  overflow: hidden;
}
.colHead__sort {
  width: 13px;
  height: 29px;
  border: 1px solid #bbb;
  display: flex;
  align-items: center;
  justify-content: center;
}
.colHead__sort::after {
  content: "";
  border-left: 4px solid transparent;
  border-right: 4px solid transparent;
  border-top: 6px solid #555;
}

/* sim tree */
.tree {
  flex: 1;
  background-color: #fff;
  padding-top: 5px;
  position: relative;
}
.vline {
  position: absolute;
  width: 1px;
  background-image: repeating-linear-gradient(#999 0 1px, transparent 1px 2px);
}
.vline--one {
  left: 29px;
  top: 20px;
  height: 523px;
}
.vline--two {
  left: 46px;
  top: 50px;
  height: 431px;
}
.tree__row {
  height: 31px;
  display: flex;
  align-items: center;
  position: relative;
  white-space: nowrap;
}
.l0 { padding-left: 5px; }
.l1 { padding-left: 23px; }
.l2 { padding-left: 41px; }
.tree__row--selected {
  background-color: #c0c0c0;
}
.exp {
  display: block;
  flex: none;
  width: 17px;
  height: 11px;
  margin-bottom: 4px;
}
.ico {
  flex: none;
  width: 12px;
  height: 12px;
  margin: 0 13px 4px 0;
}
.ico--ball {
  width: 13px;
  height: 13px;
  margin-left: -1px;
}
.ico--cap {
  width: 16px;
  height: 16px;
  margin: 0 11px 4px -2px;
}
.tree__unit {
  position: absolute;
  left: 390px;
  width: 138px;
  overflow: hidden;
}

/* objects */
.cursorBox {
  position: absolute;
  left: 407px;
  top: 0;
  height: 29px;
  width: 130px;
  background-color: #e2e9df;
  border: 1px solid #c6d0c4;
  display: flex;
  align-items: center;
  font-family: "Liberation Mono", monospace;
  font-size: 23px;
  color: #333;
}
.cursorBox svg {
  width: 16px;
  height: 16px;
  flex: none;
  margin: 0 1px;
}
.cursorBox__dot {
  width: 9px;
  height: 9px;
  border-radius: 50%;
  background-color: #10c010;
  border: 1px solid #0a7a0a;
  margin: 0 4px;
}
.cursorBox__time {
  flex: 1;
  white-space: pre;
}
.cursorMore {
  position: absolute;
  left: 542px;
  top: 9px;
  border-top: 5px solid transparent;
  border-bottom: 5px solid transparent;
  border-left: 5px solid #000;
}
.objList {
  flex: 1;
  background-color: #505a8b;
  padding-top: 5px;
  margin-left: 1px;
  color: #fff;
  overflow: hidden;
}
.objRow {
  height: 31px;
  display: grid;
  grid-template-columns: 13px 26px 324px 83px 71px 30px;
  padding-left: 7px;
  align-items: center;
  white-space: nowrap;
}
.sig {
  width: 16px;
  height: 16px;
  margin-bottom: 4px;
}
.hscroll {
  height: 16px;
  flex: none;
  margin-top: 2px;
  border-top: 1px solid #a2a3a5;
  border-bottom: 1px solid #a2a3a5;
  display: flex;
  justify-content: flex-end;
}
.hscroll__thumb {
  width: 50px;
  background-color: #b0b0b0;
}
.hscroll__arrow {
  width: 12px;
  border-top: 6px solid transparent;
  border-bottom: 6px solid transparent;
  border-left: 10px solid #fff;
}

/* processes */
.procBody {
  flex: 1;
  min-height: 0;
  display: flex;
}
.procMain {
  flex: 1;
  min-width: 0;
  display: flex;
  flex-direction: column;
}
.colHead--proc {
  display: grid;
  grid-template-columns: 348px 1fr;
  padding-left: 20px;
}
.procList {
  flex: 1;
  background-color: #8aa2ff;
  color: #fff;
  padding-top: 5px;
  margin-left: 1px;
  overflow: hidden;
}
.procRow {
  height: 31px;
  display: grid;
  grid-template-columns: 324px 1fr;
  padding-left: 46px;
  align-items: center;
  white-space: nowrap;
  overflow: hidden;
}
.vscroll {
  width: 14px;
  flex: none;
  background-color: #b0b0b0;
  display: flex;
  flex-direction: column;
  align-items: center;
  border-top: 1px solid #a2a3a5;
}
.vscroll__arrow {
  border-left: 6px solid transparent;
  border-right: 6px solid transparent;
  border-bottom: 10px solid #fff;
  margin-top: 2px;
}
.vscroll__box {
  width: 12px;
  height: 9px;
  background-color: #eeeff1;
  margin-top: 1px;
}

/* wave */
.waveHead {
  height: 23px;
  flex: none;
  display: flex;
  background-color: #808080;
  margin-left: 3px;
  border-bottom: 3px solid #eeeff1;
}
.waveHead__names {
  width: 157px;
  flex: none;
  padding-left: 9px;
  margin-right: 2px;
}
.waveHead__filter {
  width: 30px;
  height: 20px;
  border: 1px solid #ccc;
  border-bottom: none;
  display: flex;
  align-items: flex-start;
  padding-left: 2px;
  overflow: hidden;
}
.waveHead__filter svg {
  width: 16px;
  height: 16px;
  margin-top: 3px;
}
.waveHead__filter i {
  margin: 14px 0 0 2px;
  border-left: 3px solid transparent;
  border-right: 3px solid transparent;
  border-top: 3px solid #000;
}
.waveHead__msgs {
  width: 101px;
  flex: none;
  border: 1px solid #eeeff1;
  color: #eeeff1;
  text-align: right;
  line-height: 24px;
  overflow: hidden;
  margin-right: 3px;
}
.waveHead__plot {
  flex: 1;
  background: linear-gradient(90deg, #000 228px, #ffc400 228px, #ffc400 231px, #000 231px);
}
.waveBody {
  flex: 1;
  min-height: 0;
  display: flex;
  margin-left: 3px;
}
.waveNames {
  width: 157px;
  flex: none;
  background-color: #808080;
  border-left: 8px solid #fff;
  color: #e8e8e8;
  margin-right: 2px;
  padding-top: 5px;
}
.waveVals {
  width: 101px;
  flex: none;
  background-color: #808080;
  color: #e8e8e8;
  margin-right: 3px;
  padding-top: 5px;
}
.waveNames, .waveVals {
  box-shadow: 2px 0 0 #fff;
}
.waveRow {
  height: 32px;
  display: flex;
  align-items: center;
  white-space: nowrap;
}
.waveNames .waveRow {
  padding-left: 5px;
}
.waveNames .sig {
  margin: 0 11px 4px 0;
  flex: none;
}
.waveNames .exp {
  margin-right: -4px;
}
.waveVals .waveRow {
  padding-left: 3px;
}
.waveEnd {
  height: 1px;
  background-color: #000;
  margin: -4px 4px 0 2px;
}
.wavePlot {
  flex: 1;
  position: relative;
  background-color: #000;
  background-image: linear-gradient(90deg, transparent 58px, #808080 58px, #808080 59px, transparent 59px), linear-gradient(90deg, transparent 113px, #808080 113px, #808080 114px, transparent 114px), linear-gradient(90deg, transparent 168px, #808080 168px, #808080 169px, transparent 169px), linear-gradient(90deg, transparent 223px, #808080 223px, #808080 224px, transparent 224px);
  padding-top: 5px;
}
.waveCursor {
  position: absolute;
  left: 228px;
  top: 0;
  bottom: 0;
  width: 3px;
  background-color: #ffc400;
}
.mark {
  width: 1px;
  height: 1px;
  margin-left: 3px;
  background-color: #e00000;
}

/* popup menus */
.menu {
  position: absolute;
  background-color: #eeeff1;
  border: 1px solid #9a9a9a;
  border-top-color: #fff;
  border-left-color: #fff;
  padding: 0 1px;
}
.menu--context {
  left: 371px;
  top: 452px;
  width: 331px;
  height: 792px;
}
.menu--addto {
  left: 699px;
  top: 770px;
  width: 151px;
  height: 167px;
}
.menu--wave {
  left: 847px;
  top: 775px;
  width: 376px;
  height: 101px;
}
.menu__item {
  height: 32.8px;
  display: flex;
  align-items: center;
  padding: 0 0 2px 3px;
  position: relative;
  white-space: nowrap;
}
.menu--addto .menu__item {
  padding: 0 0 0 2px;
}
.menu--wave .menu__item {
  padding-left: 1px;
}
.menu__item--off {
  color: #8f8f8f;
}
.menu__item--on {
  background-color: #6070b4;
  color: #fff;
  box-shadow: inset 0 -1px 0 #3c4680;
}
.menu__key {
  position: absolute;
  left: 238px;
}
.menu__sep {
  height: 1px;
  border: none;
  background-color: #9a9a9a;
  margin: 13.7px 0;
}
.subArrow {
  position: absolute;
  right: 1px;
  top: 11px;
  width: 7px;
  height: 11px;
}
```
